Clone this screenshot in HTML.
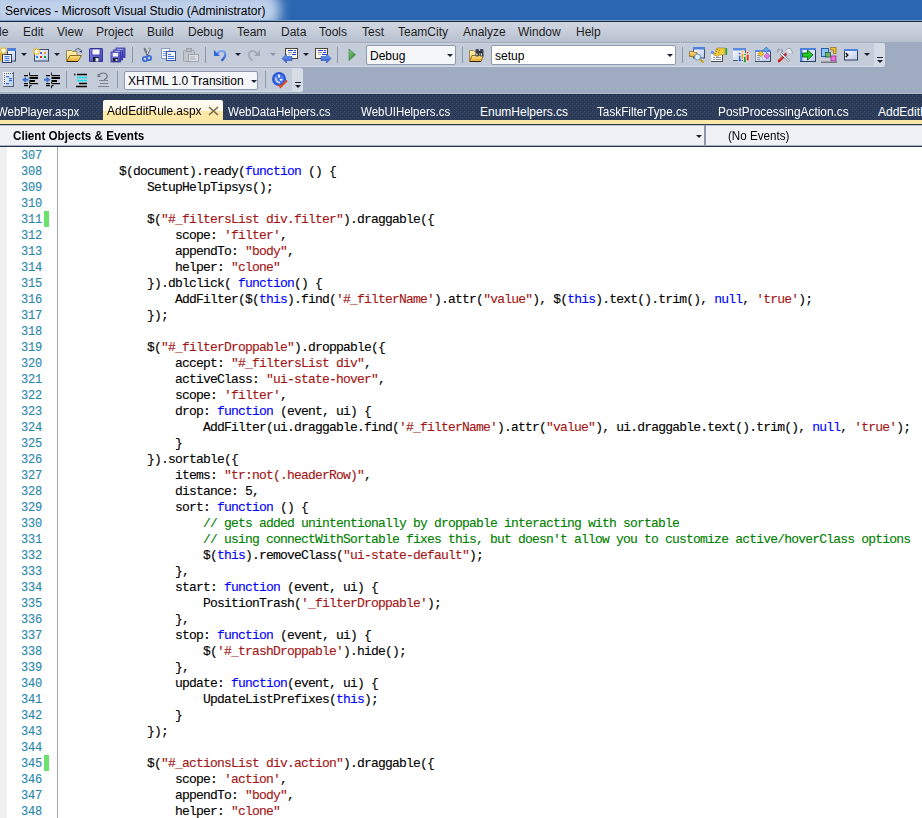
<!DOCTYPE html>
<html><head><meta charset="utf-8">
<style>
*{box-sizing:border-box}
html,body{margin:0;padding:0;width:922px;height:818px;overflow:hidden;background:#fff;font-family:"Liberation Sans",sans-serif}
.abs{position:absolute}
#title{position:absolute;left:0;top:0;width:922px;height:22px;background:#2b66b2;overflow:hidden;border-bottom:1px solid #1e2a3c}
#title .glow{position:absolute;left:-10px;top:-8px;width:290px;height:36px;background:rgba(200,215,236,.95);border-radius:0 14px 14px 0;filter:blur(6px)}
#title .hl{position:absolute;left:0;top:20px;width:922px;height:1px;background:#7f9fcc}
#title span{position:absolute;left:5px;top:4px;font-size:12px;color:#000;white-space:nowrap}
#menu{position:absolute;left:0;top:22px;width:922px;height:21px;background:linear-gradient(#d0d6e0,#c6cdda 50%,#b6c0cf);border-bottom:1px solid #a0abbe}
#menu span{position:absolute;top:3px;font-size:12px;color:#1e1e1e;white-space:nowrap}
#tray{position:absolute;left:0;top:43px;width:922px;height:51px;background:#9fabc1;border-bottom:1px solid #b3bdcd}
.tb{position:absolute;background:#c4ccda;border-radius:0 3px 3px 0;border-top:1px solid #cbd2de;border-bottom:1px solid #d3d9e3}
.ovf{position:absolute;top:0;background:#d6dce6;border-radius:0 3px 3px 0}
.grip{position:absolute;width:6px;height:7px;border-top:1px solid #1b2130}
.grip:after{content:"";position:absolute;left:0;top:2px;border-left:3px solid transparent;border-right:3px solid transparent;border-top:3px solid #1b2130}
.sep{position:absolute;width:1px;background:#8a95a8}
.combo{position:absolute;border:1px solid #8e99ac;border-radius:2px;font-size:12px}
.combo span{position:absolute;white-space:nowrap;color:#000}
.carr{position:absolute;width:0;height:0;border-left:3px solid transparent;border-right:3px solid transparent;border-top:3px solid #1b2130}
.darr{position:absolute;width:0;height:0;border-left:3px solid transparent;border-right:3px solid transparent;border-top:3px solid #1b2130}
.darr.g{border-top-color:#8d95a3}
#tabs{position:absolute;left:0;top:94px;width:922px;height:31px;background:#2b3b58;border-bottom:1px solid #2b3a55}
#tabpat{position:absolute;left:0;top:0}
.tab{position:absolute;top:11px;transform-origin:0 0;font-size:12px;color:#fff;white-space:nowrap;line-height:14px}
#atab{position:absolute;left:103px;top:6px;width:120px;height:20px;border-radius:2px 2px 0 0;background:linear-gradient(#fffcf4,#fff5dc 80%,#fff3d6);overflow:hidden}
#atab:after{content:"";position:absolute;left:0;top:11px;width:120px;height:9px;background:#ffe8a6}
#atab span{position:absolute;z-index:1;transform-origin:0 0;font-size:12px;white-space:nowrap;line-height:14px}
#band{position:absolute;left:0;top:26px;width:922px;height:4px;background:#ffe8a6}
#xclose{position:absolute;left:104.5px;top:6.2px;width:11px;height:10px;z-index:1}
#navbar{position:absolute;left:0;top:125px;width:922px;height:22px;background:#f0f1f6;border-top:1px solid #b9c1ce;border-bottom:1px solid #24324c}
#navbar:after{content:"";position:absolute;left:0;bottom:0;width:922px;height:1px;background:#a9b2c1}
#navbar span{position:absolute;transform-origin:0 0;font-size:12px;white-space:nowrap;color:#000}
#editor{position:absolute;left:0;top:147px;width:922px;height:671px;background:#fff}
#gutter{position:absolute;left:0;top:0;width:7px;height:672px;background:#f0f0f0}
.chg{position:absolute;left:44px;width:5px;height:16px;background:#6ce26c}
#lnsep{position:absolute;left:57px;top:0;width:1px;height:672px;background:#a5a5a5}
pre{margin:0;font-family:"Liberation Mono",monospace;font-size:13px;letter-spacing:-0.8px;line-height:16px;-webkit-text-stroke:0.12px currentColor;position:absolute}
#ln{left:21px;top:1px;color:#2787aa;font-size:12px;letter-spacing:-0.2px}
#code{left:63px;top:1px;color:#000}
.k{color:#0000ff}.s{color:#a31515}.c{color:#008000}
</style></head><body>
<div id="title"><div class="glow"></div><div class="hl"></div><span>Services - Microsoft Visual Studio (Administrator)</span></div>
<div id="menu">
<span style="left:-11px">File</span>
<span style="left:23px">Edit</span>
<span style="left:57px">View</span>
<span style="left:96px">Project</span>
<span style="left:147px">Build</span>
<span style="left:188px">Debug</span>
<span style="left:237px">Team</span>
<span style="left:281px">Data</span>
<span style="left:319px">Tools</span>
<span style="left:362px">Test</span>
<span style="left:398px">TeamCity</span>
<span style="left:463px">Analyze</span>
<span style="left:518px">Window</span>
<span style="left:576px">Help</span>
</div>
<div id="tray">
<div id="tb1" class="tb" style="left:0;top:0;width:885px;height:24px">
<div class="ovf" style="left:874px;top:-1px;width:11px;height:24px"><div class="grip" style="left:3px;top:14px"></div></div>
</div>
<div id="tb2" class="tb" style="left:0;top:25px;width:303px;height:24px">
<div class="ovf" style="left:292px;top:-1px;width:11px;height:24px"><div class="grip" style="left:3px;top:14px"></div></div>
</div>
<!-- separators row1 -->
<div class="sep" style="left:132px;top:4px;height:16px"></div>
<div class="sep" style="left:205px;top:4px;height:16px"></div>
<div class="sep" style="left:337px;top:4px;height:16px"></div>
<div class="sep" style="left:462px;top:4px;height:16px"></div>
<div class="sep" style="left:682px;top:4px;height:16px"></div>
<!-- combos row1 -->
<div class="combo" style="left:366px;top:2px;width:90px;height:20px;background:#f4f6fa"><span style="left:3px;top:3px">Debug</span><div class="carr" style="left:80px;top:8px"></div></div>
<div class="combo" style="left:491px;top:2px;width:185px;height:20px;background:#fff"><span style="left:3px;top:3px">setup</span><div class="carr" style="left:175px;top:8px"></div></div>
<!-- small dropdown arrows row1 -->
<div class="darr" style="left:21px;top:10px"></div>
<div class="darr" style="left:54px;top:10px"></div>
<div class="darr" style="left:235px;top:10px"></div>
<div class="darr g" style="left:270px;top:10px"></div>
<div class="darr" style="left:303px;top:10px"></div>
<div class="darr" style="left:864px;top:10px"></div>
<!-- row2 -->
<div class="sep" style="left:66px;top:28px;height:17px"></div>
<div class="sep" style="left:117px;top:28px;height:17px"></div>
<div class="sep" style="left:265px;top:28px;height:17px"></div>
<div class="combo" style="left:124px;top:28px;width:134px;height:19px;background:#f4f6fa"><span style="left:3px;top:2px">XHTML 1.0 Transition</span><div class="carr" style="left:126px;top:8px"></div></div>
</div>
<svg id="icons" width="922" height="93" viewBox="0 0 922 93" style="position:absolute;left:0;top:0">
<defs>
<linearGradient id="gWin" x1="0" y1="0" x2="1" y2="1"><stop offset="0" stop-color="#ffffff"/><stop offset="1" stop-color="#b9c8ea"/></linearGradient>
<linearGradient id="gFold" x1="0" y1="0" x2="0" y2="1"><stop offset="0" stop-color="#fde48a"/><stop offset="1" stop-color="#eaa829"/></linearGradient>
<linearGradient id="gFoldB" x1="0" y1="0" x2="0" y2="1"><stop offset="0" stop-color="#fff2b0"/><stop offset="1" stop-color="#f1cf6a"/></linearGradient>
<linearGradient id="gFlop" x1="0" y1="0" x2="1" y2="1"><stop offset="0" stop-color="#8c8cf0"/><stop offset="1" stop-color="#3d3db0"/></linearGradient>
<linearGradient id="gBlue" x1="0" y1="0" x2="0" y2="1"><stop offset="0" stop-color="#78a6f5"/><stop offset="1" stop-color="#2956c8"/></linearGradient>
<linearGradient id="gGreen" x1="0" y1="0" x2="1" y2="1"><stop offset="0" stop-color="#8fd08f"/><stop offset="1" stop-color="#1f7a1f"/></linearGradient>
<radialGradient id="gSpark"><stop offset="0" stop-color="#ffffff"/><stop offset=".45" stop-color="#fff0a0"/><stop offset="1" stop-color="#e0b020" stop-opacity=".85"/></radialGradient>
</defs>
<!-- ===== ROW 1 ===== -->
<!-- New Project -->
<rect x="7.5" y="48.5" width="8" height="12.5" fill="url(#gWin)" stroke="#34476b"/>
<rect x="7" y="48" width="9" height="3" fill="#4b80dc"/>
<rect x="0" y="53" width="1.6" height="8" fill="#e5a81c"/>
<rect x="2.5" y="54.5" width="9" height="8" fill="#eef2fb" stroke="#2d3b58"/>
<rect x="4.5" y="56" width="5" height="1.2" fill="#4f7fe0"/><rect x="4.5" y="58" width="5" height="1.2" fill="#4f7fe0"/><rect x="4.5" y="60" width="5" height="1.2" fill="#4f7fe0"/>
<path d="M3.5 46.5v8M-0.5 50.5h8M0.7 47.7l5.6 5.6M6.3 47.7l-5.6 5.6" stroke="#ecbd2c" stroke-width="1.3"/><circle cx="3.5" cy="50.5" r="2" fill="#fffbe0"/><circle cx="3.5" cy="50.5" r="1" fill="#fff"/>
<!-- Add New Item -->
<rect x="34.5" y="49.5" width="14" height="11.5" fill="url(#gWin)" stroke="#3b4b6a"/>
<rect x="40" y="52" width="2" height="2" fill="#6a5ce0"/><rect x="44" y="52" width="2" height="2" fill="#f59a18"/>
<rect x="36" y="56" width="2" height="2" fill="#1e8ef5"/><rect x="40" y="56" width="2" height="2" fill="#e82a10"/><rect x="44" y="56" width="2" height="2" fill="#12a020"/>
<path d="M36.5 47.5v8M32.5 51.5h8M33.7 48.7l5.6 5.6M39.3 48.7l-5.6 5.6" stroke="#ecbd2c" stroke-width="1.3"/><circle cx="36.5" cy="51.5" r="2" fill="#fffbe0"/><circle cx="36.5" cy="51.5" r="1" fill="#fff"/>
<!-- Open -->
<path d="M66.5 61.5V50.5h5l1 1h4.5v3" fill="url(#gFoldB)" stroke="#9a8450"/>
<path d="M66.5 61.5L70 55.5h11.5L78 61.5z" fill="url(#gFold)" stroke="#8c6d2a" stroke-linejoin="round"/>
<path d="M67 61.5h11" stroke="#2d2210"/>
<path d="M75 50.5c1-2 4-2.5 5.5-0.5" fill="none" stroke="#5b6f95" stroke-width="1.2"/>
<path d="M79 51.5l3-1.5v3z" fill="#3f5688"/>
<!-- Save -->
<rect x="89" y="48" width="14" height="14" rx="1" fill="url(#gFlop)"/>
<rect x="89.5" y="48.5" width="13" height="13" rx="1" fill="none" stroke="#3535a0"/>
<rect x="92" y="49" width="8" height="6" fill="#f4f6fc" stroke="#3535a0" stroke-width=".8"/>
<rect x="93" y="57" width="6" height="4.5" fill="#1c1c28"/><rect x="95.5" y="58" width="3" height="3.5" fill="#e8ecf4"/>
<!-- Save All -->
<rect x="116" y="48" width="9" height="9.5" fill="url(#gFlop)" stroke="#3535a0" stroke-width=".8"/>
<rect x="117.5" y="49" width="5" height="1.5" fill="#eef"/>
<rect x="113.5" y="50" width="9" height="10" fill="url(#gFlop)" stroke="#3535a0" stroke-width=".8"/>
<rect x="115" y="51" width="5" height="1.5" fill="#eef"/>
<rect x="111" y="52" width="9.5" height="10" fill="url(#gFlop)" stroke="#3535a0" stroke-width=".8"/>
<rect x="113" y="53" width="5" height="3.5" fill="#f4f6fc"/>
<rect x="113" y="58" width="5" height="3.5" fill="#1c1c28"/><rect x="115.5" y="59" width="2" height="2" fill="#ccd"/>
<!-- Cut -->
<path d="M144.3 48.2L147.8 56M150 48L146.6 56" stroke="#6e737c" stroke-width="2"/>
<path d="M149.3 48.5L147 53.8" stroke="#f0f2f6" stroke-width="1"/>
<circle cx="145" cy="59" r="2.2" fill="none" stroke="#3b6fd8" stroke-width="1.8"/>
<circle cx="149" cy="58" r="2.2" fill="none" stroke="#3b6fd8" stroke-width="1.8"/>
<!-- Copy -->
<rect x="161.5" y="48.5" width="8" height="10" fill="#f5f8ff" stroke="#8ea0c0"/>
<rect x="163" y="51" width="4" height="1" fill="#7aa0e8"/><rect x="163" y="53" width="5" height="1" fill="#7aa0e8"/><rect x="163" y="55" width="5" height="1" fill="#7aa0e8"/>
<rect x="166.5" y="51.5" width="9" height="9" fill="#fdfdff" stroke="#2f56b5"/>
<rect x="168" y="54" width="3" height="1" fill="#3e74dc"/><rect x="168" y="56" width="6" height="1" fill="#3e74dc"/><rect x="168" y="58" width="6" height="1" fill="#3e74dc"/>
<!-- Paste (disabled) -->
<rect x="183.5" y="50.5" width="11" height="11" rx="1" fill="#c3c6cc" stroke="#a0a4ab"/>
<rect x="186.5" y="48.5" width="5" height="3" fill="#b9bcc2" stroke="#9a9ea6"/>
<rect x="188.5" y="54.5" width="10" height="7" fill="#dcdee2" stroke="#9fa3aa"/>
<rect x="190" y="56.5" width="5" height="1" fill="#a8acb3"/><rect x="190" y="58.5" width="6" height="1" fill="#a8acb3"/>
<!-- Undo -->
<path d="M217.2 53.8C219 50.3 224.8 49.8 225.2 54C225.5 57 223.5 59 221.5 60.8" fill="none" stroke="url(#gBlue)" stroke-width="2.2"/>
<path d="M214 50v6h6z" fill="#2f66dc"/>
<!-- Redo disabled -->
<path d="M256.8 53.8C255 50.3 249.2 49.8 248.8 54C248.5 57 250.5 59 252.5 60.8" fill="none" stroke="#a9aeb6" stroke-width="2"/>
<path d="M260 50v6h-6z" fill="#a0a5ad"/>
<!-- Nav back -->
<rect x="285.5" y="48.5" width="12" height="10" fill="#fbf8ee" stroke="#4a4536"/>
<rect x="288" y="50" width="5" height="1" fill="#1d3fe0"/><rect x="294" y="50" width="2" height="1" fill="#1d3fe0"/>
<rect x="288" y="52" width="4" height="1" fill="#9a9a9a"/><rect x="293" y="52" width="3" height="1" fill="#1d3fe0"/>
<rect x="288" y="54" width="3" height="1" fill="#bbb"/><rect x="292" y="54" width="4" height="1" fill="#1d3fe0"/>
<path d="M282 58.5l4.5-4.5v2.5h5.5v4h-5.5v2.5z" fill="url(#gBlue)" stroke="#2a50b8" stroke-width=".6"/>
<!-- Nav fwd -->
<rect x="315.5" y="48.5" width="12" height="10" fill="#fbf8ee" stroke="#4a4536"/>
<rect x="318" y="50" width="5" height="1" fill="#1d3fe0"/><rect x="324" y="50" width="2" height="1" fill="#1d3fe0"/>
<rect x="318" y="52" width="4" height="1" fill="#9a9a9a"/><rect x="323" y="52" width="3" height="1" fill="#1d3fe0"/>
<rect x="318" y="54" width="3" height="1" fill="#bbb"/><rect x="322" y="54" width="4" height="1" fill="#1d3fe0"/>
<path d="M331 58.5l-4.5-4.5v2.5h-5.5v4h5.5v2.5z" fill="url(#gBlue)" stroke="#2a50b8" stroke-width=".6"/>
<!-- Play -->
<path d="M349 49v11.5l6.5-5.75z" fill="url(#gGreen)" stroke="#1e6e1e" stroke-width=".5"/>
<!-- Find -->
<path d="M469.5 61.5V50.5h4l1 1h5v4" fill="url(#gFoldB)" stroke="#9a8450"/>
<path d="M469.5 61.5L472 55.5h11.5L481 61.5z" fill="url(#gFold)" stroke="#8c6d2a"/>
<path d="M470 61.5h11" stroke="#2d2210"/>
<rect x="475.5" y="49" width="3.5" height="7.5" rx="1" fill="#3d4350"/><rect x="480" y="49" width="3.5" height="7.5" rx="1" fill="#3d4350"/>
<rect x="477.5" y="51" width="4" height="2" fill="#2a2e38"/>
<rect x="476.3" y="53.5" width="1.2" height="2" fill="#e0e4ea"/><rect x="480.8" y="53.5" width="1.2" height="2" fill="#e0e4ea"/>
<!-- R1: window+folder+magnifier -->
<rect x="693.5" y="47.5" width="11" height="10.5" fill="url(#gWin)" stroke="#3e4e70"/>
<rect x="693" y="47" width="12" height="2.5" fill="#4c82de"/>
<path d="M689.5 56.5v-5h3.5l1 1h3v4z" fill="url(#gFold)" stroke="#8c6d2a" stroke-width=".8"/>
<circle cx="697.5" cy="57" r="3" fill="#d8f0ff" stroke="#6e8eb0" stroke-width="1"/>
<path d="M700 59.5l3.5 3" stroke="#c8a020" stroke-width="2"/>
<!-- R2: properties hand -->
<rect x="711" y="51" width="12" height="11" fill="#474d57"/>
<rect x="711" y="51" width="11" height="10" fill="#f8fafd"/>
<rect x="711" y="51" width="3" height="3" fill="#6a9ae8"/>
<rect x="713" y="57" width="2" height="1" fill="#8a9ab2"/><rect x="716" y="57" width="5" height="1" fill="#8a9ab2"/>
<rect x="713" y="59" width="2" height="1" fill="#8a9ab2"/><rect x="716" y="59" width="5" height="1" fill="#8a9ab2"/>
<path d="M713.5 55l3.5-7h8v5.5l-2 1.5h-4l-1 1.5z" fill="#f3cc3a" stroke="#8a6a10" stroke-width=".5"/>
<path d="M715 53l1 1M716 51l1 1M717 49l1 1M718 52l1 1M719 50l1 1" stroke="#6a5010" stroke-width=".7"/>
<rect x="725.5" y="48" width="1.6" height="7" fill="#2aa030"/>
<!-- R3: window with pins -->
<rect x="733" y="48" width="13" height="13" fill="#4a5668"/>
<rect x="733" y="48" width="12" height="12" fill="url(#gWin)"/>
<rect x="733" y="48" width="13" height="2.5" fill="#5a8ae0"/>
<g stroke="#ffffff" stroke-width=".8">
<rect x="738.3" y="55" width="3" height="7" rx="1.3" fill="#2a62e8"/><circle cx="739.8" cy="53.6" r="1.3" fill="#2a62e8"/>
<rect x="741" y="53" width="3" height="6.5" rx="1.3" fill="#f0a020"/><circle cx="742.5" cy="51.6" r="1.3" fill="#f0a020"/>
<rect x="743.5" y="56" width="3" height="7" rx="1.3" fill="#28a030"/><circle cx="745" cy="54.6" r="1.3" fill="#28a030"/>
<rect x="746.2" y="54" width="3" height="7" rx="1.3" fill="#e03020"/><circle cx="747.7" cy="52.6" r="1.3" fill="#e03020"/>
</g>
<!-- R4: edit diamonds -->
<rect x="755" y="50" width="16" height="12" fill="#3e4a5e"/>
<rect x="755" y="50" width="15" height="11" fill="url(#gWin)"/>
<rect x="755" y="50" width="1" height="11" fill="#8c98ac"/>
<rect x="755" y="50" width="16" height="2" fill="#5a8ae0"/>
<rect x="762" y="52" width="1" height="9" fill="#c8d0e0"/>
<rect x="757" y="55" width="3" height="1" fill="#8a9ab2"/><rect x="757" y="57" width="3" height="1" fill="#8a9ab2"/><rect x="757" y="59" width="3" height="1" fill="#8a9ab2"/>
<path d="M766.3 47l2.8 2.8-2.8 2.8-2.8-2.8z" fill="#62a8ec" stroke="#2d5ca8" stroke-width=".6"/>
<path d="M760.8 50.8l3 3-3 3-3-3z" fill="#f4c230" stroke="#b08010" stroke-width=".6"/>
<path d="M767 52.9l3 3-3 3-3-3z" fill="#e67ae6" stroke="#a040a0" stroke-width=".6"/>
<!-- R5: tools -->
<path d="M779 61l6.5-6.5" stroke="#c82020" stroke-width="2.6" stroke-linecap="round"/>
<path d="M779.3 60l5.5-5.5" stroke="#f07060" stroke-width=".7"/>
<path d="M780.5 53l9 8.5" stroke="#3a4050" stroke-width="2.4"/>
<path d="M780.5 53l9 8.5" stroke="#ffffff" stroke-width="1.2"/>
<path d="M778 52.5c-1-2 0.5-3.5 2-3.5M781.5 49c1 1 1 2.5 0 3.5" fill="none" stroke="#8a909c" stroke-width="1.2"/>
<path d="M785.5 50.5l2.5-2h2.5l2 4-1 1.5" fill="#e4e7ee" stroke="#8a909c" stroke-width=".8"/>
<!-- R6: green arrow window -->
<rect x="800" y="48" width="16" height="14" fill="#2e3e60"/>
<rect x="800" y="48" width="15" height="13" fill="url(#gWin)"/>
<rect x="800" y="48" width="16" height="2" fill="#4c82de"/><rect x="800" y="50" width="2.5" height="11" fill="#4c82de"/>
<path d="M802.5 53h5v-3l5.5 5-5.5 5v-3h-5z" fill="#22c822" stroke="#0a6a0a" stroke-width=".9"/>
<!-- R7: layers -->
<rect x="821.5" y="48.5" width="7" height="8" fill="#8cc4f4" stroke="#2a5cb0"/>
<path d="M830.5 47.5h5.5v6h-2.5v-3.5h-3z" fill="#f2c030" stroke="#9a7010" stroke-width=".8"/>
<rect x="825.5" y="52.5" width="5" height="4.5" fill="#6ab860" stroke="#2a5a3a" stroke-width=".8"/>
<rect x="831" y="56" width="5" height="5" fill="#f070e0" stroke="#8a3080" stroke-width=".8"/>
<rect x="821" y="61.5" width="16" height="1.5" fill="#7a7a7a"/>
<!-- R8: console -->
<rect x="844.5" y="49.5" width="13" height="10.5" fill="url(#gWin)" stroke="#2e3e60"/>
<rect x="844" y="49" width="14" height="2" fill="#4c82de"/>
<path d="M845.8 53l2 2-2 2" fill="none" stroke="#000" stroke-width="1.4"/>
<!-- ===== ROW 2 ===== -->
<!-- doc outline -->
<rect x="3" y="72" width="11" height="15" fill="#56617a"/>
<rect x="3" y="72" width="10" height="14" fill="url(#gWin)"/>
<path d="M4 73.5h1M6 73.5h1M8 73.5h1M10 73.5h1M12 73.5h1M4.5 75v1M4.5 77v1M4.5 79v1M4.5 81v1M4.5 83v1" stroke="#505a6e"/>
<rect x="6" y="76" width="3" height="1.2" fill="#2a6ae0"/><rect x="9" y="78" width="3" height="1.2" fill="#2a6ae0"/><rect x="9" y="80" width="3" height="1.2" fill="#2a6ae0"/><rect x="6" y="83" width="3" height="1.2" fill="#2a6ae0"/>
<!-- outdent -->
<g fill="#000">
<rect x="29" y="72.5" width="1" height="1.2"/><rect x="29" y="87" width="1" height="1.2"/>
<rect x="24" y="75" width="4" height="1.2"/><rect x="29.5" y="75" width="8.5" height="1.2"/>
<rect x="29.5" y="77" width="8.5" height="2"/>
<rect x="29.5" y="80" width="5.5" height="2"/>
<rect x="24" y="83" width="4" height="1.2"/><rect x="29.5" y="83" width="8.5" height="1.2"/>
<rect x="24" y="85" width="4" height="1.2"/><rect x="29.5" y="85" width="2" height="1.2"/>
<rect x="29" y="74" width="1" height="1"/><rect x="29" y="82" width="1" height="1"/><rect x="29" y="86" width="1" height="1"/>
</g>
<path d="M22 79.7l4-3v2h2.5v2h-2.5v2z" fill="#3b6fd8"/>
<!-- indent -->
<g fill="#000">
<rect x="51" y="72.5" width="1" height="1.2"/><rect x="51" y="87" width="1" height="1.2"/>
<rect x="46" y="75" width="4" height="1.2"/><rect x="51.5" y="75" width="8.5" height="1.2"/>
<rect x="51.5" y="77" width="8.5" height="2"/>
<rect x="51.5" y="80" width="5.5" height="2"/>
<rect x="46" y="83" width="4" height="1.2"/><rect x="51.5" y="83" width="8.5" height="1.2"/>
<rect x="46" y="85" width="4" height="1.2"/><rect x="51.5" y="85" width="2" height="1.2"/>
<rect x="51" y="74" width="1" height="1"/><rect x="51" y="82" width="1" height="1"/><rect x="51" y="86" width="1" height="1"/>
</g>
<path d="M50.5 79.7l-4-3v2h-2.5v2h2.5v2z" fill="#3b6fd8"/>
<!-- format -->
<path d="M74 74.5h1.5M77 74.5h10" stroke="#000" stroke-width="1.3"/>
<path d="M77 77.5h10M77 80.5h10" stroke="#10e0f0" stroke-width="1.3"/>
<path d="M79 83.5h8M76 86.5h11" stroke="#000" stroke-width="1.3"/>
<!-- grey undo -->
<path d="M98.5 75.5c2-3 7-3.5 8.5-0.5c1 2-1 4-3 4.5" fill="none" stroke="#6d7380" stroke-width="1.2"/>
<path d="M97.5 73.5v3.5h3.5z" fill="#6d7380"/>
<path d="M99 80.5h9M100 83.5h8M98 86.5h11" stroke="#7c818c" stroke-width="1"/>
<!-- validate -->
<circle cx="279" cy="79" r="7" fill="#2c58d8"/>
<circle cx="279" cy="79" r="5" fill="#4a7ae8"/>
<path d="M276 77.5a4 4 0 0 0 4 5" fill="none" stroke="#ffffff" stroke-width="1.2"/>
<path d="M278.5 74.5l1 3M280 80l2.5-0.5" stroke="#ffffff" stroke-width="1.6"/>
<path d="M278.5 84.5l2 2.5 6.5-6.5" fill="none" stroke="#e04820" stroke-width="2"/>
</svg>
<div id="tabs"><svg id="tabpat" width="922" height="25"><defs><pattern id="dots" width="4" height="4" patternUnits="userSpaceOnUse"><rect x="0" y="1" width="1" height="1" fill="#3a4d6c"/><rect x="2" y="3" width="1" height="1" fill="#3a4d6c"/></pattern></defs><rect x="0" y="0" width="922" height="1" fill="#25344f"/><rect x="0" y="1" width="922" height="24" fill="url(#dots)"/><rect x="0" y="25" width="922" height="1" fill="#1f2d47"/></svg>
<div id="atab"><span style="left:4px;top:4px;color:#000;transform:scaleX(.99)">AddEditRule.aspx</span><svg id="xclose" width="11" height="10" viewBox="0 0 11 10"><path d="M1 1l9 8M10 1l-9 8" stroke="#75684a" stroke-width="1.6"/></svg></div>
<div class="tab" style="left:-3px;transform:scaleX(.95)">WebPlayer.aspx</div>
<div class="tab" style="left:228px;transform:scaleX(.962)">WebDataHelpers.cs</div>
<div class="tab" style="left:361px;transform:scaleX(.957)">WebUIHelpers.cs</div>
<div class="tab" style="left:480px">EnumHelpers.cs</div>
<div class="tab" style="left:597px;transform:scaleX(.978)">TaskFilterType.cs</div>
<div class="tab" style="left:718px;transform:scaleX(.99)">PostProcessingAction.cs</div>
<div class="tab" style="left:878px">AddEditRule.aspx</div>
<div id="band"></div>
</div>
<div id="navbar">
<span style="left:13px;top:3px;font-weight:bold;transform:scaleX(.97)">Client Objects &amp; Events</span>
<div class="carr" style="left:696px;top:9px"></div>
<div style="position:absolute;left:704px;top:-1px;width:2px;height:21px;background:#8c97a9"></div>
<span style="left:728px;top:3px;transform:scaleX(.968)">(No Events)</span>
</div>
<div id="editor">
<div id="gutter"></div>
<div id="lnsep"></div>
<div class="chg" style="top:64px"></div>
<div class="chg" style="top:608px"></div>
<pre id="ln">307
308
309
310
311
312
313
314
315
316
317
318
319
320
321
322
323
324
325
326
327
328
329
330
331
332
333
334
335
336
337
338
339
340
341
342
343
344
345
346
347
348</pre>
<pre id="code">

        $(document).ready(<span class="k">function</span> () {
            SetupHelpTipsys();

            $(<span class="s">"#_filtersList div.filter"</span>).draggable({
                scope: <span class="s">'filter'</span>,
                appendTo: <span class="s">"body"</span>,
                helper: <span class="s">"clone"</span>
            }).dblclick( <span class="k">function</span>() {
                AddFilter($(<span class="k">this</span>).find(<span class="s">'#_filterName'</span>).attr(<span class="s">"value"</span>), $(<span class="k">this</span>).text().trim(), <span class="k">null</span>, <span class="s">'true'</span>);
            });

            $(<span class="s">"#_filterDroppable"</span>).droppable({
                accept: <span class="s">"#_filtersList div"</span>,
                activeClass: <span class="s">"ui-state-hover"</span>,
                scope: <span class="s">'filter'</span>,
                drop: <span class="k">function</span> (event, ui) {
                    AddFilter(ui.draggable.find(<span class="s">'#_filterName'</span>).attr(<span class="s">"value"</span>), ui.draggable.text().trim(), <span class="k">null</span>, <span class="s">'true'</span>);
                }
            }).sortable({
                items: <span class="s">"tr:not(.headerRow)"</span>,
                distance: 5,
                sort: <span class="k">function</span> () {
                    <span class="c">// gets added unintentionally by droppable interacting with sortable</span>
                    <span class="c">// using connectWithSortable fixes this, but doesn't allow you to customize active/hoverClass options</span>
                    $(<span class="k">this</span>).removeClass(<span class="s">"ui-state-default"</span>);
                },
                start: <span class="k">function</span> (event, ui) {
                    PositionTrash(<span class="s">'_filterDroppable'</span>);
                },
                stop: <span class="k">function</span> (event, ui) {
                    $(<span class="s">'#_trashDroppable'</span>).hide();
                },
                update: <span class="k">function</span>(event, ui) {
                    UpdateListPrefixes(<span class="k">this</span>);
                }
            });

            $(<span class="s">"#_actionsList div.action"</span>).draggable({
                scope: <span class="s">'action'</span>,
                appendTo: <span class="s">"body"</span>,
                helper: <span class="s">"clone"</span>
</pre>
</div>
</body></html>
